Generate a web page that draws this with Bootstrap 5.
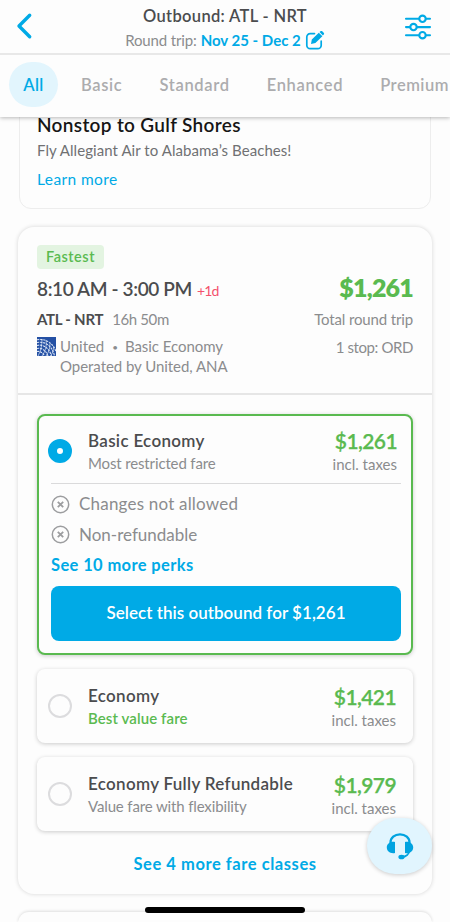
<!DOCTYPE html>
<html lang="en">
<head>
<meta charset="utf-8">
<meta name="viewport" content="width=device-width, initial-scale=1">
<title>Outbound: ATL - NRT</title>
<link href="https://cdn.jsdelivr.net/npm/bootstrap@5.3.0/dist/css/bootstrap.min.css" rel="stylesheet">
<script src="https://cdn.jsdelivr.net/npm/bootstrap@5.3.0/dist/js/bootstrap.bundle.min.js"></script>
<style>
:root{--sky:#00aae6;--leaf:#5aba50;--ink:#4b4c4e;--ash:#8b8c8e}
body{font-family:Lato,"Open Sans",sans-serif;font-size:15px;line-height:20px;color:var(--ash);background:#fdfdfd;height:922px;overflow:hidden;position:relative}
a{color:var(--sky);text-decoration:none}
.ink{color:var(--ink)}.sky{color:var(--sky)}.leaf{color:var(--leaf)}
.semi{font-weight:600}
.app-head{z-index:3;background:#fdfdfd;box-shadow:0 1px 4px rgba(0,0,0,.28)}
.title-bar{height:55px;border-bottom:2px solid #e8e8e8;padding:6px 18px 0 16px}
.trip{margin-left:12px}
.trip-name{font-size:16.5px;letter-spacing:.33px}
.trip-dates{line-height:19px;margin-top:5px}
.tabs-row{height:62px;padding:0 0 3px 9px}
.tabs-row a{font-size:16.5px;letter-spacing:.66px;font-weight:600;color:#acacae;margin-right:37px}
.tabs-row .pill{width:49px;height:45px;border-radius:23px;background:#e2f5fd;color:var(--sky);margin-right:23px;letter-spacing:.4px}
.tabs-row a:last-child{margin-right:0;letter-spacing:.5px}
.promo{margin:-20px 19px 0;height:112px;border:1px solid #ededed;border-radius:0 0 12px 12px;padding:16px 17px 0}
.promo-title{font-size:19px;letter-spacing:.33px;line-height:22px;color:#161616}
.promo-text{letter-spacing:.06px;color:#707173;margin-top:4px}
.promo a{font-size:15.5px;letter-spacing:.4px;margin-top:9px}
.flight{margin:18px 18px 0;height:667px;border-radius:16px;background:#fdfdfd;box-shadow:0 0 4px rgba(0,0,0,.16)}
.summary{height:168px;padding:18px 19px 0;border-bottom:2px solid #e6e6e6}
.tag{width:67px;height:24px;border-radius:4px;background:#e3f4e1;color:var(--leaf);font-size:14.5px;letter-spacing:.5px}
.times{font-size:19px;letter-spacing:-.38px;line-height:24px;height:24px;margin-top:8px}
.plus{font-size:14px;color:#f4516c;letter-spacing:-.8px;margin-left:5px}
.route{letter-spacing:-.25px;margin-right:9px}
.tight{letter-spacing:-.4px}
.slim{letter-spacing:-.14px}
.total{font-size:25px;letter-spacing:-.8px;line-height:24px;font-weight:800;margin-top:-2px}
.legs{margin-top:8px}
.carrier{line-height:19px;letter-spacing:-.05px}
.speck{font-size:10px;margin:0 7px 0 8px;vertical-align:1px}
.fares{padding:19px 19px 0}
.fare{border-radius:8px;background:#fdfdfd;box-shadow:0 1px 4px rgba(0,0,0,.2)}
.fare+.fare{margin-top:14px}
.fare-on{height:241px;border:2.5px solid var(--leaf);padding:0 10px 0 12px}
.fare-top{padding:2px 17px 0 11px;height:74px}
.fare-on .fare-top{padding:4px 4px 0 0;height:67px;margin-left:-3px}
.dot{width:24px;height:24px;border-radius:50%;border:2px solid #dcdcde;margin:-2px 16px 0 0}
.dot-on{border:9px solid var(--sky);background:#fff}
.fare-name{font-size:17px;letter-spacing:.31px;line-height:23px}
.fare-note{letter-spacing:-.14px;line-height:23px}
.fare-note.semi{letter-spacing:.1px}
.price{font-size:21px;letter-spacing:-.6px;line-height:23px;margin-bottom:2px;-webkit-text-stroke:.25px var(--leaf)}
.perks{border-top:1.5px solid #dadadb;padding-top:5px}
.perk{font-size:17px;letter-spacing:.2px;line-height:30.5px;gap:9px}
.perk+.perk{letter-spacing:0}
.more{font-size:16.5px;letter-spacing:.37px;line-height:30px}
.more-fares{letter-spacing:.56px;margin-top:18px}
.pick,.pick:hover{height:55px;border-radius:8px;background:var(--sky);color:#fff;font-size:17px;letter-spacing:.03px;margin-top:6px;border:0;padding-bottom:8px}
.next-card{margin:18px 18px 0;height:11px;border-radius:16px 16px 0 0;box-shadow:0 -1px 3px rgba(0,0,0,.12)}
.help{left:367px;top:818px;width:65px;height:56px;border-radius:29px;background:#e1f5fe;box-shadow:0 1px 4px rgba(0,0,0,.2);z-index:4}
.home{left:145px;top:907px;width:160px;height:6px;border-radius:3px;background:#000;z-index:5}
</style>
</head>
<body>
<header class="app-head position-relative">
  <div class="title-bar d-flex justify-content-between">
    <svg class="mt-1" width="18" height="30" viewBox="0 0 18 30" fill="none" stroke="#00aae6" stroke-width="3.4" stroke-linecap="round" stroke-linejoin="round"><path d="M13.700 5.300 3 16l10.700 10.800"/></svg>
    <div class="trip text-center">
      <div class="trip-name ink semi">Outbound: ATL - NRT</div>
      <div class="trip-dates d-flex justify-content-center"><span class="slim">Round trip:</span><b class="sky ms-1">Nov 25 - Dec 2</b>
        <svg class="ms-1" width="20" height="19" viewBox="0 0 20 19" fill="none" stroke="#00aae6" stroke-width="1.7" stroke-linecap="round"><path d="M9.5 2.600H5.200A3.400 3.400 0 0 0 1.800 6v8.200a3.400 3.400 0 0 0 3.400 3.400h7.600a3.400 3.400 0 0 0 3.400-3.400v-4"/><path d="m6 13 .8-4.500 7-6.800 3.600 3.500-7 6.800zM14.500 1.100l.9-.8a1.400 1.400 0 0 1 1.900 0l1.400 1.400a1.400 1.400 0 0 1 0 1.900l-.8.900z" fill="#00aae6" stroke="none"/></svg>
      </div>
    </div>
    <svg class="mt-2" width="28" height="28" viewBox="0 0 28 28" fill="#fdfdfd" stroke="#00aae6" stroke-width="2.100" stroke-linecap="round"><path d="M2 4.800h24M2 13.100h24M2 21.200h24"/><circle cx="18.500" cy="4.800" r="3.200"/><circle cx="9.500" cy="13.100" r="3.200"/><circle cx="18.500" cy="21.200" r="3.200"/></svg>
  </div>
  <nav class="tabs-row d-flex align-items-center overflow-hidden text-nowrap">
    <a href="#" class="pill d-flex align-items-center justify-content-center flex-shrink-0">All</a>
    <a href="#">Basic</a><a href="#">Standard</a><a href="#">Enhanced</a><a href="#">Premium</a>
  </nav>
</header>
<main>
  <section class="promo">
    <div class="promo-title semi">Nonstop to Gulf Shores</div>
    <div class="promo-text">Fly Allegiant Air to Alabama’s Beaches!</div>
    <a href="#" class="d-block">Learn more</a>
  </section>

  <section class="flight">
    <div class="summary">
      <div class="tag semi d-flex align-items-center justify-content-center">Fastest</div>
      <div class="d-flex justify-content-between times">
        <div class="ink semi d-flex align-items-baseline">8:10 AM - 3:00 PM<span class="plus fw-normal">+1d</span></div>
        <div class="total leaf">$1,261</div>
      </div>
      <div class="d-flex justify-content-between legs text-nowrap">
        <div><b class="ink route">ATL - NRT</b><span class="tight">16h 50m</span></div>
        <div class="slim">Total round trip</div>
      </div>
      <div class="d-flex mt-2">
        <svg class="me-1 flex-shrink-0" width="19" height="19" viewBox="0 0 19 19"><path fill="#2450a4" d="M0 0h19v19H0z"/><g fill="none" stroke="#dbe5f5"><path d="M0 5.500C7 4 15 8 17.500 19M0 2.800C9 1 17 7 19 15M0 8.500c6-1.500 12 2 14.500 10.500M0 11.500c5-1 9 2 11 7.500M0 14.500c3.500-.5 6 1.500 7.500 4.500" stroke-width="1.100" stroke-dasharray="2.200 .9"/><path d="M5 2c0 6-1 12-4 17M9 3c1 6-1 12-4 16M13 6c0 5-1 9-4 13M16.500 10c0 4-1 6-3 9" stroke-width=".7"/></g></svg>
        <div class="carrier flex-grow-1">United<span class="speck">•</span>Basic Economy<br>Operated by United, ANA</div>
        <div class="tight">1 stop: ORD</div>
      </div>
    </div>

    <div class="fares">
      <div class="fare fare-on">
        <div class="fare-top d-flex align-items-center">
          <span class="dot dot-on"></span>
          <div class="flex-grow-1"><div class="fare-name ink semi">Basic Economy</div><div class="fare-note">Most restricted fare</div></div>
          <div class="text-end"><div class="price leaf semi">$1,261</div><div>incl. taxes</div></div>
        </div>
        <div class="perks">
          <div class="perk d-flex align-items-center"><svg width="19" height="19" viewBox="0 0 19 19" fill="none" stroke="#9c9d9f" stroke-width="1.500"><circle cx="9.500" cy="9.500" r="8.200"/><path d="m6.800 6.800 5.400 5.400m0-5.400-5.400 5.400" stroke-width="1.800"/></svg>Changes not allowed</div>
          <div class="perk d-flex align-items-center"><svg width="19" height="19" viewBox="0 0 19 19" fill="none" stroke="#9c9d9f" stroke-width="1.500"><circle cx="9.500" cy="9.500" r="8.200"/><path d="m6.800 6.800 5.400 5.400m0-5.400-5.400 5.400" stroke-width="1.800"/></svg>Non-refundable</div>
          <a href="#" class="more d-block fw-bold">See 10 more perks</a>
        </div>
        <a href="#" class="btn pick semi d-flex align-items-center justify-content-center">Select this outbound for $1,261</a>
      </div>

      <div class="fare fare-top d-flex align-items-center">
        <span class="dot"></span>
        <div class="flex-grow-1"><div class="fare-name ink semi">Economy</div><div class="fare-note leaf semi">Best value fare</div></div>
        <div class="text-end"><div class="price leaf semi">$1,421</div><div>incl. taxes</div></div>
      </div>
      <div class="fare fare-top d-flex align-items-center">
        <span class="dot"></span>
        <div class="flex-grow-1"><div class="fare-name ink semi">Economy Fully Refundable</div><div class="fare-note">Value fare with flexibility</div></div>
        <div class="text-end"><div class="price leaf semi">$1,979</div><div>incl. taxes</div></div>
      </div>
      <a href="#" class="more more-fares d-block fw-bold text-center">See 4 more fare classes</a>
    </div>
  </section>
  <section class="next-card"></section>
</main>
<a href="#" class="help position-absolute d-flex align-items-center justify-content-center" aria-label="Support">
  <svg width="28" height="28" viewBox="0 0 28 28" fill="none" stroke="#00a3e0" stroke-linecap="round"><path d="M4.500 12v-1.500C4.500 5.800 8.600 2.300 14 2.300s9.500 3.500 9.500 8.200V12" stroke-width="2.300"/><path d="M23.500 18c-.3 4-3.500 6.800-8 7" stroke-width="2"/><ellipse cx="15.500" cy="25" rx="3.100" ry="2.300" fill="#00a3e0" stroke="none"/><path fill="#00a3e0" stroke="none" d="M9 10v11C4.200 22 .8 19 .8 15.500S4.200 9 9 10zM19 10v11c4.800 1 8.200-2 8.200-5.500S23.800 9 19 10z"/></svg>
</a>
<div class="home position-absolute"></div>
</body>
</html>
